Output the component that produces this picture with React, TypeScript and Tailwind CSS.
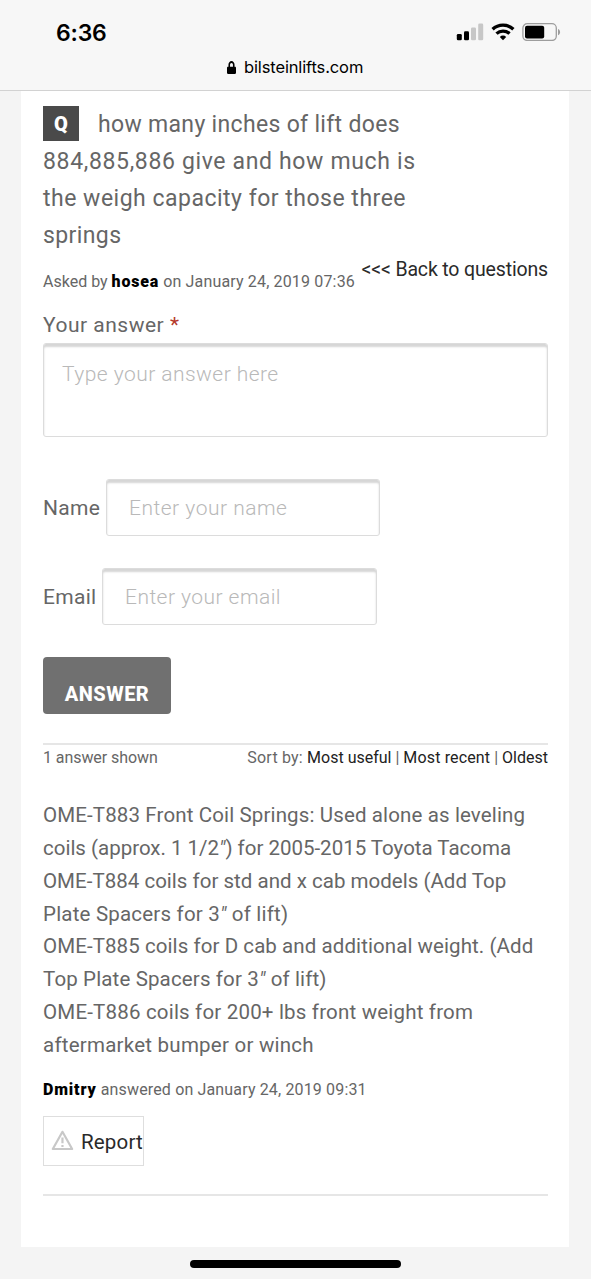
import { Fragment } from "react";
import { FaLock } from "react-icons/fa";

const questionLines = [
  { text: "884,885,886 give and how much is", className: "tracking-[0.65px]" },
  { text: "the weigh capacity for those three", className: "tracking-[0.5px]" },
  { text: "springs", className: "tracking-[0.4px]" },
];

const answerLines = [
  { text: "OME-T883 Front Coil Springs: Used alone as leveling", className: "tracking-[0.13px]" },
  { text: "coils (approx. 1 1/2″) for 2005-2015 Toyota Tacoma", className: "tracking-[-0.01px]" },
  { text: "OME-T884 coils for std and x cab models (Add Top", className: "tracking-[0.02px]" },
  { text: "Plate Spacers for 3″ of lift)", className: "tracking-[0.2px]" },
  { text: "OME-T885 coils for D cab and additional weight. (Add", className: "tracking-[0.08px]" },
  { text: "Top Plate Spacers for 3″ of lift)", className: "tracking-[0.14px]" },
  { text: "OME-T886 coils for 200+ lbs front weight from", className: "tracking-[0.19px]" },
  { text: "aftermarket bumper or winch", className: "tracking-[0.24px]" },
];

const inputStyle =
  "block rounded-[3px] border border-[#dcdcdc] bg-white shadow-[inset_0_3px_2px_#d6d6d6] font-light text-[21px] placeholder:text-[#b9b9b9] placeholder:opacity-100 outline-none";

// inch marks are slanted
const InchText = ({ text }: { text: string }) => (
  <>
    {text.split("″").map((part, i) => (
      <Fragment key={i}>
        {i > 0 && <i>″</i>}
        {part}
      </Fragment>
    ))}
  </>
);

const StatusBar = () => {
  return (
    <header className="h-[91px] bg-[#f7f7f7] border-b border-[#d2d2d2] font-['Inter',sans-serif] text-black">
      <div className="flex items-center justify-between h-[64px] pl-[56px] pr-[30px]">
        <div className="text-[23px] leading-[28px] pt-px font-semibold tracking-[-0.2px]">6:36</div>
        <div className="flex items-center">
          <svg width="28" height="18" viewBox="0 0 28 18">
            <rect x="0.8" y="11" width="5" height="6.3" rx="1.3" fill="#000" />
            <rect x="8" y="8.2" width="5" height="9.1" rx="1.3" fill="#000" />
            <rect x="15" y="4.5" width="5" height="12.8" rx="1.3" fill="#c7c7c7" />
            <rect x="22.2" y="0.6" width="5" height="16.7" rx="1.3" fill="#c7c7c7" />
          </svg>
          <svg className="ml-[7px]" width="24" height="18" viewBox="0 0 24 18" fill="none" stroke="#000" strokeWidth="3.3">
            <path d="M1.6 6.3a15 15 0 0 1 20.8 0" />
            <path d="M5.5 10.6a9.5 9.5 0 0 1 13 0" />
            <path d="M12 17.2l-3.2-3.3a4.6 4.6 0 0 1 6.4 0z" fill="#000" stroke="none" />
          </svg>
          <svg className="ml-[7px]" width="39" height="18" viewBox="0 0 39 18">
            <rect x="0.9" y="0.7" width="33.4" height="16.8" rx="4.4" fill="none" stroke="#9d9d9d" strokeWidth="1.3" />
            <rect x="3" y="2.8" width="19.2" height="12.6" rx="2" fill="#000" />
            <path d="M36 6c2.8 1 2.8 5.2 0 6.2z" fill="#9d9d9d" />
          </svg>
        </div>
      </div>
      <div className="flex items-center h-[6px] pl-[227px]">
        <FaLock className="w-[9px] h-[13px]" preserveAspectRatio="none" />
        <span className="ml-[8px] text-[16.5px] tracking-[-0.13px]">bilsteinlifts.com</span>
      </div>
    </header>
  );
};

const App = () => {
  return (
    <div className="h-[1279px] w-[591px] overflow-hidden bg-[#f4f4f4] font-['Roboto',sans-serif] text-[#666]">
      <StatusBar />
      <main className="ml-[21px] w-[548px] h-[1156px] bg-white pl-[22px] pr-[21px] pt-[15px]">
        <div className="text-[23px] leading-[37px] whitespace-nowrap">
          <div className="flex h-[37px]">
            <span className="flex items-center justify-center w-[36px] h-[35px] bg-[#4a4a4a] text-white text-[20px] font-black pt-[2px]">Q</span>
            <span className="ml-[19px] tracking-[0.32px]">how many inches of lift does</span>
          </div>
          {questionLines.map(({ text, className }) => (
            <div key={text} className={className}>{text}</div>
          ))}
        </div>

        <div className="flex justify-between h-[54px] whitespace-nowrap">
          <div className="pt-[17px] text-[16px] leading-[22px] tracking-[0.16px]">
            <span className="tracking-[0px]">Asked by </span>
            <b className="font-black text-black tracking-[0.8px]">hosea</b> on January 24, 2019 07:36
          </div>
          <a className="pt-[3px] text-[19.5px] leading-[26px] tracking-[-0.15px] text-[#2a2a2a]">&lt;&lt;&lt; Back to questions</a>
        </div>

        <form>
          <label className="block h-[35px] leading-[35px] text-[21px] tracking-[0.5px]">
            Your answer <span className="text-[#b5392b]">*</span>
          </label>
          <textarea
            className={`${inputStyle} w-[505px] h-[94px] resize-none px-[18px] pt-[15px] leading-[30px] tracking-[0.45px]`}
            placeholder="Type your answer here"
          />
          <div className="flex items-center mt-[42px] h-[57px]">
            <label className="w-[63px] pt-[3px] text-[21px] tracking-[0.3px]">Name</label>
            <input className={`${inputStyle} w-[274px] h-[57px] px-[22px] tracking-[0.5px]`} placeholder="Enter your name" />
          </div>
          <div className="flex items-center mt-[32px] h-[57px]">
            <label className="w-[59px] pt-[3px] text-[21px] tracking-[0.3px]">Email</label>
            <input className={`${inputStyle} w-[275px] h-[57px] px-[22px] tracking-[0.45px]`} placeholder="Enter your email" />
          </div>
          <button type="button" className="block mt-[32px] w-[128px] h-[57px] rounded-[4px] bg-[#707070] pt-[16px] text-white text-[20px] font-extrabold tracking-[0.5px]">
            ANSWER
          </button>
        </form>

        <div className="flex justify-between mt-[29px] h-[56px] border-t-2 border-[#e6e6e6] text-[16px] leading-[26px] whitespace-nowrap">
          <div className="tracking-[-0.07px]">1 answer shown</div>
          <div>
            <span className="tracking-[0.2px]">Sort by: </span>
            <a className="text-[#222]">Most useful</a> | <a className="text-[#222] tracking-[0.15px]">Most recent</a> | <a className="text-[#222]">Oldest</a>
          </div>
        </div>

        <div className="text-[20.5px] leading-[32.85px] whitespace-nowrap">
          {answerLines.map(({ text, className }) => (
            <div key={text} className={className}>
              <InchText text={text} />
            </div>
          ))}
        </div>
        <div className="mt-[16px] text-[16px] leading-[24px] tracking-[0.15px]">
          <b className="font-black text-black tracking-[0.85px]">Dmitry</b> answered on January 24, 2019 09:31
        </div>
        <button type="button" className="flex items-center mt-[14px] w-[101px] h-[50px] border border-[#dedede] pl-[7px] text-[20.5px] text-[#2a2a2a]">
          <svg width="23" height="21" viewBox="0 0 23 21" fill="none" stroke="#c8c8c8" strokeWidth="2.2" strokeLinejoin="round">
            <path d="M11.5 1.8L21.2 19H1.8z" />
            <path d="M11.5 7.5v5.8M11.5 15v2" />
          </svg>
          <span className="ml-[7px] pt-[3px] tracking-[0.2px]">Report</span>
        </button>
        <hr className="mt-[28px] border-t-2 border-[#e6e6e6]" />
      </main>
      <div className="mx-auto mt-[13px] w-[211px] h-[8px] rounded-full bg-black" />
    </div>
  );
};

export default App;
